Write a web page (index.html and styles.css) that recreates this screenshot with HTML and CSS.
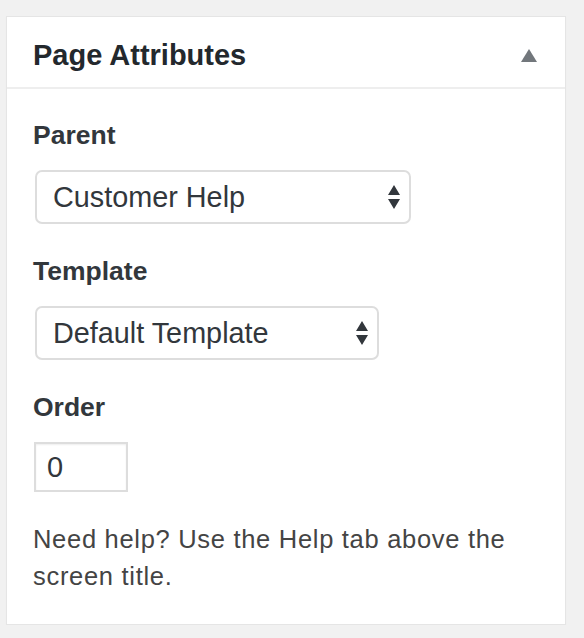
FILE: index.html
```html
<!DOCTYPE html>
<html>
<head>
<meta charset="utf-8">
<link rel="stylesheet" href="styles.css">
</head>
<body>
<div class="panel">
  <div class="panel-head">
    <h2 class="panel-title">Page Attributes</h2>
    <svg class="toggle" width="16" height="13" viewBox="0 0 16 13"><path d="M8 0 L16 13 L0 13 Z" fill="#72777c"/></svg>
  </div>
  <div class="panel-body">
    <div class="label">Parent</div>
    <div class="select select-parent">
      <span class="select-text">Customer Help</span>
      <svg class="arrows" width="14" height="24" viewBox="0 0 14 24"><path d="M7 0 L13 10 L1 10 Z M1 14 L13 14 L7 24 Z" fill="#32373c"/></svg>
    </div>
    <div class="label">Template</div>
    <div class="select select-template">
      <span class="select-text">Default Template</span>
      <svg class="arrows" width="14" height="24" viewBox="0 0 14 24"><path d="M7 0 L13 10 L1 10 Z M1 14 L13 14 L7 24 Z" fill="#32373c"/></svg>
    </div>
    <div class="label">Order</div>
    <div class="input">0</div>
    <p class="help">Need help? Use the Help tab above the screen title.</p>
  </div>
</div>
</body>
</html>
```
FILE: styles.css
```css
html, body {
  margin: 0;
  padding: 0;
  background: #f1f1f1;
}
body {
  padding: 16px 0 0 6px;
  font-family: "Liberation Sans", Arial, sans-serif;
  color: #23282d;
}
.panel {
  width: 558px;
  height: 607px;
  background: #fff;
  border: 1px solid #e5e5e5;
  box-shadow: 0 1px 1px rgba(0,0,0,.04);
}
.panel-head {
  height: 64px;
  padding: 6px 28px 0 26px;
  border-bottom: 2px solid #eeeeee;
  display: flex;
  align-items: center;
  justify-content: space-between;
}
.panel-title {
  margin: 0;
  font-size: 29px;
  font-weight: 700;
  color: #23282d;
}
.panel-body {
  padding: 31px 26px 0 26px;
}
.label {
  font-size: 26.5px;
  font-weight: 700;
  color: #32373c;
  line-height: 30px;
  margin-bottom: 20px;
}
.select {
  box-sizing: border-box;
  height: 54px;
  border: 2px solid #dddddd;
  border-radius: 7px;
  display: flex;
  align-items: center;
  justify-content: space-between;
  padding: 0 8px 0 16px;
  margin-left: 2px;
  margin-bottom: 32px;
  font-size: 28.8px;
  color: #32373c;
}
.select-parent { width: 376px; }
.select-template { width: 344px; }
.input {
  box-sizing: border-box;
  width: 94px;
  height: 50px;
  margin-left: 1px;
  margin-bottom: 29px;
  border: 2px solid #dddddd;
  box-shadow: inset 0 1px 2px rgba(0,0,0,.07);
  font-size: 29px;
  color: #32373c;
  padding-left: 11px;
  line-height: 46px;
}
.help {
  margin: 0;
  font-size: 25.5px;
  letter-spacing: 0.7px;
  line-height: 37px;
  color: #444;
  width: 490px;
}
```
